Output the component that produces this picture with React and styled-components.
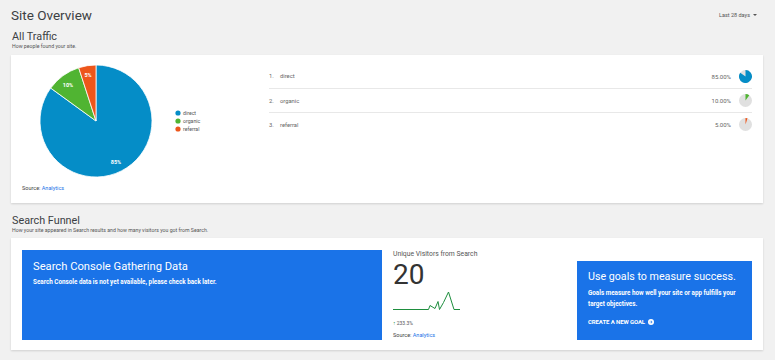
import React from 'react';
import styled, { createGlobalStyle } from 'styled-components';

const GlobalStyle = createGlobalStyle`
  body {
    margin: 0;
    background: #f1f1f1;
    font-family: Roboto, "Liberation Sans", sans-serif;
    color: #333;
  }
`;

const Page = styled.div`
  width: 775px;
  height: 360px;
  box-sizing: border-box;
  padding: 6px 12px 0 11px;
  overflow: hidden;
`;

const TopBar = styled.div`
  display: flex;
  justify-content: space-between;
  align-items: center;
  height: 17px;
`;

const PageTitle = styled.h1`
  margin: 0;
  font-size: 13.5px;
  font-weight: 400;
  color: #3c4043;
`;

const RangePicker = styled.div`
  display: flex;
  align-items: center;
  gap: 3px;
  font-size: 5.5px;
  color: #555;
  padding-right: 6px;
  &::after {
    content: '';
    border-left: 2.5px solid transparent;
    border-right: 2.5px solid transparent;
    border-top: 2.5px solid #555;
  }
`;

const SectionHead = styled.div`
  margin-top: ${p => p.$top}px;
  padding-left: 1px;
`;

const SectionTitle = styled.h2`
  margin: 0;
  font-size: 10.8px;
  font-weight: 400;
  line-height: 12px;
  color: #3c4043;
`;

const SectionSub = styled.p`
  margin: 0;
  font-size: 5.2px;
  line-height: 7px;
  color: #555;
`;

const Card = styled.div`
  background: #fff;
  box-shadow: 0 1px 2px rgba(0, 0, 0, 0.14);
  margin-top: ${p => p.$top}px;
  height: ${p => p.$h}px;
  box-sizing: border-box;
`;

const TrafficCard = styled(Card)`
  display: flex;
  padding: 4px 11px 0 11px;
`;

const ChartCol = styled.div`
  width: 247px;
  display: flex;
  flex-direction: column;
`;

const Source = styled.div`
  font-size: 5.5px;
  color: #444;
  line-height: 8px;
  margin-top: ${p => p.$top || 0}px;
  a {
    color: #1a73e8;
    text-decoration: none;
  }
`;

const RankList = styled.ol`
  list-style: none;
  margin: 5px 0 0 0;
  padding: 0;
  flex: 1;
`;

const RankRow = styled.li`
  display: flex;
  align-items: center;
  height: 24px;
  border-top: ${p => (p.$first ? 'none' : '1px solid #e8e8e8')};
  box-sizing: border-box;
  font-size: 5.8px;
  color: #666;
`;

const RankNum = styled.span`
  width: 11px;
`;

const RankLabel = styled.span`
  flex: 1;
`;

const RankValue = styled.span`
  font-size: 6px;
  margin-right: 8px;
`;

const FunnelCard = styled(Card)`
  display: grid;
  grid-template-columns: 360px 1fr 175px;
  padding: 12px 11px 10px 11px;
`;

const BlueBox = styled.div`
  background: #1a73e8;
  color: #fff;
  padding: ${p => p.$pad};
  margin-top: ${p => p.$top || 0}px;
  box-sizing: border-box;
`;

const BlueTitle = styled.div`
  font-size: ${p => p.$size}px;
  line-height: 14px;
  white-space: nowrap;
  margin-bottom: ${p => p.$gap}px;
`;

const BlueText = styled.div`
  font-size: 6.3px;
  font-weight: 700;
  line-height: 11px;
`;

const GoalLink = styled.div`
  display: flex;
  align-items: center;
  gap: 3px;
  margin-top: 8px;
  font-size: 6px;
  font-weight: 700;
  letter-spacing: -0.1px;
`;

const Stats = styled.div`
  padding: 0 11px;
  display: flex;
  flex-direction: column;
`;

const StatLabel = styled.div`
  font-size: 6.8px;
  color: #555;
  line-height: 9px;
`;

const StatValue = styled.div`
  font-size: 28px;
  line-height: 26px;
  margin-top: 3px;
  color: #333;
`;

const Change = styled.div`
  font-size: 5px;
  color: #555;
  margin-top: 8px;
  line-height: 7px;
  span {
    color: #1e8e3e;
    font-weight: 700;
  }
`;

const COLORS = { direct: '#058dc7', organic: '#50b432', referral: '#ed561b' };

const data = [
  { name: 'direct', value: 85 },
  { name: 'organic', value: 10 },
  { name: 'referral', value: 5 },
];

const arcPath = (cx, cy, r, start, end) => {
  const a0 = (start / 100) * Math.PI * 2 - Math.PI / 2;
  const a1 = (end / 100) * Math.PI * 2 - Math.PI / 2;
  const large = end - start > 50 ? 1 : 0;
  const x0 = cx + r * Math.cos(a0);
  const y0 = cy + r * Math.sin(a0);
  const x1 = cx + r * Math.cos(a1);
  const y1 = cy + r * Math.sin(a1);
  return `M${cx},${cy} L${x0},${y0} A${r},${r} 0 ${large} 1 ${x1},${y1} Z`;
};

const PieChart = () => {
  let acc = 0;
  const labels = [
    { t: '85%', x: 94, y: 105 },
    { t: '10%', x: 46, y: 28 },
    { t: '5%', x: 66, y: 18 },
  ];
  return (
    <svg width="240" height="125" viewBox="0 0 240 125">
      {data.map(d => {
        const p = arcPath(74, 62, 56, acc, acc + d.value);
        acc += d.value;
        return <path key={d.name} d={p} fill={COLORS[d.name]} stroke="#fff" strokeWidth="0.8" />;
      })}
      {labels.map(l => (
        <text key={l.t} x={l.x} y={l.y} fill="#fff" fontSize="5.5" fontWeight="700" textAnchor="middle" fontFamily="Roboto, sans-serif">
          {l.t}
        </text>
      ))}
      {data.map((d, i) => (
        <g key={d.name}>
          <circle cx="156" cy={54 + i * 8} r="2.6" fill={COLORS[d.name]} />
          <text x="161" y={56 + i * 8} fontSize="5.2" fill="#555" fontFamily="Roboto, sans-serif">
            {d.name}
          </text>
        </g>
      ))}
    </svg>
  );
};

const MiniPie = ({ value, color }) => (
  <svg width="13" height="13" viewBox="0 0 13 13">
    <circle cx="6.5" cy="6.5" r="6.5" fill="#e0e0e0" />
    <path d={arcPath(6.5, 6.5, 6.5, 0, value)} fill={color} />
  </svg>
);

const Sparkline = () => (
  <svg width="70" height="22" viewBox="0 0 70 22" style={{ marginTop: 2 }}>
    <polyline
      points="0,19.5 35.5,19.5 37,15.5 42,18.5 45,11.5 46.5,19.5 50.5,12.5 55.5,2 61,19.5 67,19.5"
      fill="none"
      stroke="#1e8e3e"
      strokeWidth="1"
      strokeLinejoin="round"
    />
  </svg>
);

const ArrowCircle = () => (
  <svg width="6" height="6" viewBox="0 0 24 24">
    <circle cx="12" cy="12" r="12" fill="#fff" />
    <path d="M12 6l-1.4 1.4 3.6 3.6H6v2h8.2l-3.6 3.6L12 18l6-6z" fill="#1a73e8" />
  </svg>
);

export default function App() {
  return (
    <Page>
      <GlobalStyle />
      <TopBar>
        <PageTitle>Site Overview</PageTitle>
        <RangePicker>Last 28 days</RangePicker>
      </TopBar>

      <SectionHead $top={8}>
        <SectionTitle>All Traffic</SectionTitle>
        <SectionSub>How people found your site.</SectionSub>
      </SectionHead>

      <TrafficCard $top={5} $h={148}>
        <ChartCol>
          <PieChart />
          <Source>
            Source: <a href="#">Analytics</a>
          </Source>
        </ChartCol>
        <RankList>
          {data.map((d, i) => (
            <RankRow key={d.name} $first={i === 0}>
              <RankNum>{i + 1}.</RankNum>
              <RankLabel>{d.name}</RankLabel>
              <RankValue>{d.value.toFixed(2)}%</RankValue>
              <MiniPie value={d.value} color={COLORS[d.name]} />
            </RankRow>
          ))}
        </RankList>
      </TrafficCard>

      <SectionHead $top={12}>
        <SectionTitle>Search Funnel</SectionTitle>
        <SectionSub>How your site appeared in Search results and how many visitors you got from Search.</SectionSub>
      </SectionHead>

      <FunnelCard $top={4} $h={112}>
        <BlueBox $pad="10px 11px">
          <BlueTitle $size={11.2} $gap={3}>Search Console Gathering Data</BlueTitle>
          <BlueText>Search Console data is not yet available, please check back later.</BlueText>
        </BlueBox>
        <Stats>
          <StatLabel>Unique Visitors from Search</StatLabel>
          <StatValue>20</StatValue>
          <Sparkline />
          <Change>
            <span>↑</span> 233.3%
          </Change>
          <Source $top={4}>
            Source: <a href="#">Analytics</a>
          </Source>
        </Stats>
        <BlueBox $pad="9px 11px" $top={11}>
          <BlueTitle $size={10.7} $gap={4}>Use goals to measure success.</BlueTitle>
          <BlueText>Goals measure how well your site or app fulfills your target objectives.</BlueText>
          <GoalLink>
            CREATE A NEW GOAL <ArrowCircle />
          </GoalLink>
        </BlueBox>
      </FunnelCard>
    </Page>
  );
}
